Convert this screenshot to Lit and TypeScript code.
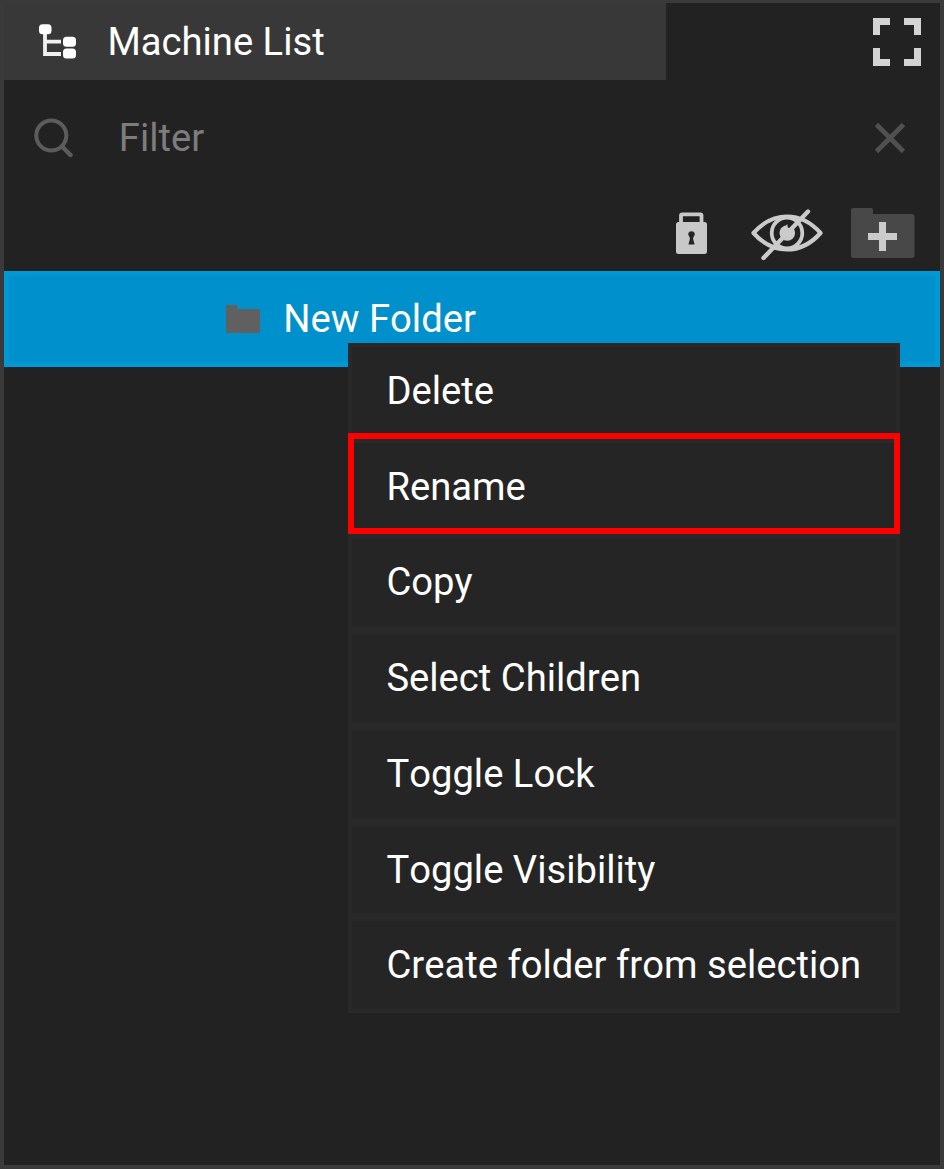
import { LitElement, html, css } from "lit";
import { customElement, state } from "lit/decorators.js";

@customElement("app-root")
export class AppRoot extends LitElement {
  @state() private items = [
    "Delete",
    "Rename",
    "Copy",
    "Select Children",
    "Toggle Lock",
    "Toggle Visibility",
    "Create folder from selection",
  ];

  static styles = css`
    :host {
      display: block;
      height: 1169px;
      font-family: Roboto, sans-serif;
      font-size: 38.2px;
      font-kerning: none;
      line-height: 44px;
      color: #fff;
    }
    * {
      box-sizing: border-box;
    }
    svg {
      display: block;
      flex: none;
    }
    .panel {
      display: flex;
      flex-direction: column;
      height: 100%;
      background: #222;
      border: 4px solid #3a3a3a;
      border-top-width: 3px;
    }
    .header {
      display: flex;
      justify-content: space-between;
      height: 77px;
      padding-right: 19px;
    }
    .tab {
      display: flex;
      align-items: center;
      width: 662px;
      padding-left: 34px;
      gap: 30.4px;
      background: #383838;
    }
    .expand {
      margin-top: 15px;
    }
    .filter {
      display: flex;
      align-items: center;
      height: 116px;
      padding: 0 35px 0 29px;
      color: #7d7d7d;
    }
    .query {
      flex: 1;
      padding-left: 44.8px;
    }
    .tools {
      display: flex;
      justify-content: flex-end;
      height: 75px;
      padding: 8px 25px 0 0;
    }
    .row {
      position: relative;
      display: flex;
      align-items: center;
      height: 96px;
      padding-left: 221px;
      gap: 23.3px;
      background: #0090cb;
      box-shadow: inset 0 0 3px 5px #0099d6;
    }
    .menu {
      position: absolute;
      left: 344px;
      top: 72px;
      width: 552px;
      height: 670px;
      display: grid;
      grid-template-rows: repeat(7, 1fr);
      background: #252525;
    }
    .item {
      display: flex;
      align-items: center;
      padding: 0.4px 0 0 34.4px;
      border: 4px solid #292929;
      white-space: nowrap;
    }
    .highlight {
      position: absolute;
      left: 0;
      top: 90px;
      width: 552px;
      height: 101px;
      border: 6px solid #f00;
    }
  `;

  render() {
    return html`
      <div class="panel">
        <div class="header">
          <div class="tab">
            <svg width="39" height="38" viewBox="0 1 39 38">
              <path d="M7 10V32H23M7 19.7H23" fill="none" stroke="#f0f0f0" stroke-width="3.8" />
              <rect x="1" y="2.2" width="12.5" height="10" rx="3.5" fill="#fff" />
              <rect x="25" y="14.700" width="13" height="10" rx="3.5" fill="#fff" />
              <rect x="25" y="26.5" width="13" height="10" rx="3.5" fill="#fff" />
            </svg>
            <span class="title">Machine List</span>
          </div>
          <svg class="expand" width="48" height="48" viewBox="0 0 48 48" fill="#d3d3d3">
            <path d="M0 0H17V7H7V17H0ZM31 0H48V17H41V7H31ZM0 30H7V41H17V48H0ZM41 30H48V48H31V41H41Z" />
          </svg>
        </div>
        <div class="filter">
          <svg width="41" height="40" viewBox="0 0 41 40" fill="none" stroke="#5c5c5c" stroke-width="4">
            <circle cx="18.3" cy="17.5" r="15" />
            <path d="M29 28.5L37.5 37" stroke-linecap="round" stroke-width="4.5" />
          </svg>
          <span class="query">Filter</span>
          <svg width="30" height="30" viewBox="0 0 30 30">
            <path d="M1.5 1.5L28.5 28.5M28.5 1.5L1.5 28.5" stroke="#505050" stroke-width="4.8" />
          </svg>
        </div>
        <div class="tools">
          <svg width="240" height="60" viewBox="0 0 240 60">
            <path d="M5.200 20V11.500Q5.200 10.300 6.500 10.300H24.500Q25.700 10.300 25.700 11.500V20" transform="translate(.8 0)" fill="none" stroke="#c8c8c8" stroke-width="3.8" />
            <rect x="1" y="18" width="31" height="32" rx="2.5" fill="#c8c8c8" />
            <path d="M16.5 27.2a3 3 0 0 1 2.3 5.2l-.8 2 1.6 6.2h-6.2l1.6-6.2-.8-2a3 3 0 0 1 2.3-5.2Z" fill="#242424" />

            <g fill="none" stroke="#cbcbcb" stroke-width="4.2">
              <path d="M78.500 29C98 7 126 7 145.500 29C126 51 98 51 78.500 29Z" stroke-linejoin="round" />
              <circle cx="112" cy="29" r="15.3" stroke-width="3.8" />
            </g>
            <circle cx="112.300" cy="29" r="7.800" fill="#cbcbcb" />
            <path d="M105 24l5 2 2-6 4 4Z" fill="#cbcbcb" />
            <circle cx="115.500" cy="21.500" r="3" fill="#222" />
            <path d="M88.500 54L133 7.500" stroke="#cbcbcb" stroke-width="4.400" stroke-linecap="round" />

            <path d="M178 4H196Q198 4 198 6V10H237Q239.500 10 239.500 12.500V51.500Q239.500 54 237 54H178.500Q176 54 176 51.500V6Q176 4 178 4Z" fill="#484848" />
            <path d="M204 18H211V29H222V36H211V47H204V36H193V29H204Z" fill="#cbcbcb" />
          </svg>
        </div>
        <div class="row">
          <svg width="35" height="28" viewBox="0 0 35 28">
            <path d="M1.500 0H12.500V4H33.500Q35 4 35 5.500V26.500Q35 28 33.500 28H2.500Q1 28 1 26.500V.5Z" fill="#606060" />
          </svg>
          <span class="label">New Folder</span>
          <div class="menu">
            ${this.items.map((item) => html`<div class="item"><span>${item}</span></div>`)}
            <div class="highlight"></div>
          </div>
        </div>
      </div>
    `;
  }
}
